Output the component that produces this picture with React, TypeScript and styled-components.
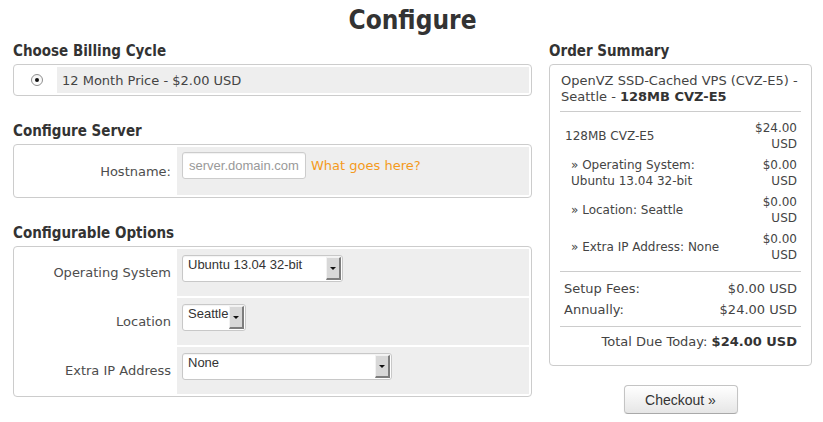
import React from 'react';
import styled, { createGlobalStyle } from 'styled-components';

const GlobalStyle = createGlobalStyle`
  html, body { margin: 0; padding: 0; background: #fff; }
  body {
    font-family: "DejaVu Sans", Verdana, sans-serif;
    font-size: 13px;
    color: #444;
  }
  * { box-sizing: border-box; }
`;

const Page = styled.div`
  width: 823px;
  padding: 0 11px 0 13px;
`;

const Title = styled.h1`
  margin: 0;
  padding-top: 3px;
  font-family: "DejaVu Sans Condensed", "DejaVu Sans", sans-serif;
  font-stretch: condensed;
  font-weight: bold;
  font-size: 26px;
  line-height: 34px;
  text-align: center;
  color: #333;
`;

const Columns = styled.div`
  display: grid;
  grid-template-columns: 519px 263px;
  column-gap: 17px;
  align-items: start;
  padding-top: 4px;
`;

const Column = styled.div`
  display: flex;
  flex-direction: column;
`;

const Section = styled.section<{ $first?: boolean }>`
  margin-top: ${p => (p.$first ? 0 : 25)}px;
`;

const SectionTitle = styled.h2`
  margin: 0 0 3px;
  font-family: "DejaVu Sans Condensed", "DejaVu Sans", sans-serif;
  font-stretch: condensed;
  font-weight: bold;
  font-size: 15px;
  line-height: 20px;
  color: #333;
`;

const Box = styled.div`
  border: 1px solid #ccc;
  border-radius: 4px;
  padding: 2px;
  display: grid;
  row-gap: 2px;
`;

const BillingRow = styled.div`
  display: grid;
  grid-template-columns: 41px 1fr;
  height: 26px;
`;

const RadioCell = styled.div`
  display: flex;
  align-items: center;
  justify-content: center;
`;

const Radio = styled.span`
  width: 12px;
  height: 12px;
  border-radius: 50%;
  border: 1px solid #8f8f8f;
  background: linear-gradient(#f4f4f4, #fff);
  display: flex;
  align-items: center;
  justify-content: center;
  &::after {
    content: '';
    width: 4px;
    height: 4px;
    border-radius: 50%;
    background: #111;
  }
`;

const BillingCell = styled.div`
  background: #eee;
  display: flex;
  align-items: center;
  padding-left: 5px;
  color: #444;
`;

const FieldRow = styled.div<{ $tall?: boolean }>`
  display: grid;
  grid-template-columns: 161px 1fr;
  height: ${p => (p.$tall ? 48 : 47)}px;
`;

const FieldLabel = styled.div`
  align-self: center;
  text-align: right;
  padding-right: 6px;
  color: #4d4d4d;
`;

const FieldCell = styled.div`
  background: #eee;
  padding: 5px 5px 0;
  display: flex;
  align-items: flex-start;
  gap: 5px;
`;

const SelectCell = styled(FieldCell)`
  padding-top: 6px;
`;

const TextInput = styled.input`
  width: 124px;
  height: 27px;
  margin: 0;
  border: 1px solid #ccc;
  border-radius: 3px;
  padding: 0 6px;
  background: #fff;
  font-family: "Liberation Sans", Arial, sans-serif;
  font-size: 13px;
  color: #555;
  box-shadow: inset 0 1px 1px rgba(0, 0, 0, 0.06);
  outline: none;
  &::placeholder { color: #999; }
`;

const HelpLink = styled.a`
  line-height: 27px;
  color: #f49a1c;
  text-decoration: none;
  font-size: 13px;
`;

const Select = styled.div<{ $width: number }>`
  width: ${p => p.$width}px;
  height: 27px;
  border: 1px solid #c8c8c8;
  border-radius: 3px;
  background: #fff;
  display: flex;
  padding: 1px;
  font-family: "Liberation Sans", Arial, sans-serif;
  font-size: 13px;
  color: #333;
  box-shadow: inset 0 1px 1px rgba(0, 0, 0, 0.05);
`;

const SelectValue = styled.span`
  flex: 1;
  padding-left: 4px;
  line-height: 16px;
  white-space: nowrap;
  overflow: hidden;
`;

const SelectArrow = styled.span`
  flex: none;
  width: 15px;
  background: #d8d8d8;
  border-top: 1px solid #f2f2f2;
  border-left: 1px solid #f2f2f2;
  border-right: 2px solid #7d7d7d;
  border-bottom: 2px solid #7d7d7d;
  display: flex;
  align-items: center;
  justify-content: center;
  &::after {
    content: '';
    border-left: 3px solid transparent;
    border-right: 3px solid transparent;
    border-top: 3px solid #111;
  }
`;

const SummaryBox = styled.div`
  border: 1px solid #ccc;
  border-radius: 4px;
  padding: 8px 10px 13px;
`;

const ProductName = styled.p`
  margin: 0;
  padding-left: 1px;
  font-size: 13px;
  line-height: 16px;
  color: #444;
  strong { color: #333; }
`;

const Rule = styled.hr<{ $gap?: number }>`
  border: 0;
  border-top: 1px solid #ccc;
  margin: ${p => p.$gap ?? 0}px 0 0;
  height: 0;
`;

const Items = styled.div`
  display: grid;
  row-gap: 5px;
  padding: 8px 0 8px;
`;

const Item = styled.div<{ $sub?: boolean }>`
  display: grid;
  grid-template-columns: 1fr 56px;
  column-gap: 8px;
  align-items: center;
  min-height: 32px;
  padding: 0 4px 0 ${p => (p.$sub ? 11 : 5)}px;
  font-size: 12px;
  line-height: 16px;
  color: #444;
`;

const Amount = styled.div`
  text-align: right;
`;

const Totals = styled.div`
  padding: 6px 4px 6px;
`;

const TotalLine = styled.div`
  display: flex;
  justify-content: space-between;
  font-size: 13px;
  line-height: 21px;
  color: #444;
`;

const DueToday = styled.div`
  padding: 4px 4px 0;
  text-align: right;
  font-size: 13px;
  line-height: 21px;
  color: #444;
  strong { color: #333; }
`;

const ButtonRow = styled.div`
  display: flex;
  justify-content: center;
  margin-top: 19px;
`;

const Button = styled.button`
  width: 114px;
  height: 29px;
  border: 1px solid #c4c4c4;
  border-bottom-color: #a9a9a9;
  border-radius: 4px;
  background: linear-gradient(#ffffff, #e6e6e6);
  box-shadow: inset 0 1px 0 rgba(255, 255, 255, 0.2), 0 1px 2px rgba(0, 0, 0, 0.05);
  font-family: "Liberation Sans", Arial, sans-serif;
  font-size: 14px;
  color: #333;
  padding: 0;
  cursor: pointer;
`;

const options = [
  { label: 'Operating System', value: 'Ubuntu 13.04 32-bit', width: 161 },
  { label: 'Location', value: 'Seattle', width: 64 },
  { label: 'Extra IP Address', value: 'None', width: 210 },
];

const items = [
  { desc: ['128MB CVZ-E5'], amount: '$24.00 USD', sub: false },
  { desc: ['» Operating System:', 'Ubuntu 13.04 32-bit'], amount: '$0.00 USD', sub: true },
  { desc: ['» Location: Seattle'], amount: '$0.00 USD', sub: true },
  { desc: ['» Extra IP Address: None'], amount: '$0.00 USD', sub: true },
];

export default function App() {
  return (
    <>
      <GlobalStyle />
      <Page>
        <Title>Configure</Title>
        <Columns>
          <Column>
            <Section $first>
              <SectionTitle>Choose Billing Cycle</SectionTitle>
              <Box>
                <BillingRow>
                  <RadioCell>
                    <Radio />
                  </RadioCell>
                  <BillingCell>12 Month Price - $2.00 USD</BillingCell>
                </BillingRow>
              </Box>
            </Section>

            <Section>
              <SectionTitle>Configure Server</SectionTitle>
              <Box>
                <FieldRow $tall>
                  <FieldLabel>Hostname:</FieldLabel>
                  <FieldCell>
                    <TextInput placeholder="server.domain.com" readOnly />
                    <HelpLink href="#">What goes here?</HelpLink>
                  </FieldCell>
                </FieldRow>
              </Box>
            </Section>

            <Section>
              <SectionTitle>Configurable Options</SectionTitle>
              <Box>
                {options.map(o => (
                  <FieldRow key={o.label}>
                    <FieldLabel>{o.label}</FieldLabel>
                    <SelectCell>
                      <Select $width={o.width}>
                        <SelectValue>{o.value}</SelectValue>
                        <SelectArrow />
                      </Select>
                    </SelectCell>
                  </FieldRow>
                ))}
              </Box>
            </Section>
          </Column>

          <Column>
            <Section $first>
              <SectionTitle>Order Summary</SectionTitle>
              <SummaryBox>
                <ProductName>
                  OpenVZ SSD-Cached VPS (CVZ-E5) -<br />
                  Seattle - <strong>128MB CVZ-E5</strong>
                </ProductName>
                <Rule $gap={6} />
                <Items>
                  {items.map((it, i) => (
                    <Item key={i} $sub={it.sub}>
                      <div>
                        {it.desc.map((d, j) => (
                          <div key={j}>{d}</div>
                        ))}
                      </div>
                      <Amount>{it.amount}</Amount>
                    </Item>
                  ))}
                </Items>
                <Rule />
                <Totals>
                  <TotalLine>
                    <span>Setup Fees:</span>
                    <span>$0.00 USD</span>
                  </TotalLine>
                  <TotalLine>
                    <span>Annually:</span>
                    <span>$24.00 USD</span>
                  </TotalLine>
                </Totals>
                <Rule />
                <DueToday>
                  Total Due Today: <strong>$24.00 USD</strong>
                </DueToday>
              </SummaryBox>
            </Section>
            <ButtonRow>
              <Button>Checkout »</Button>
            </ButtonRow>
          </Column>
        </Columns>
      </Page>
    </>
  );
}
